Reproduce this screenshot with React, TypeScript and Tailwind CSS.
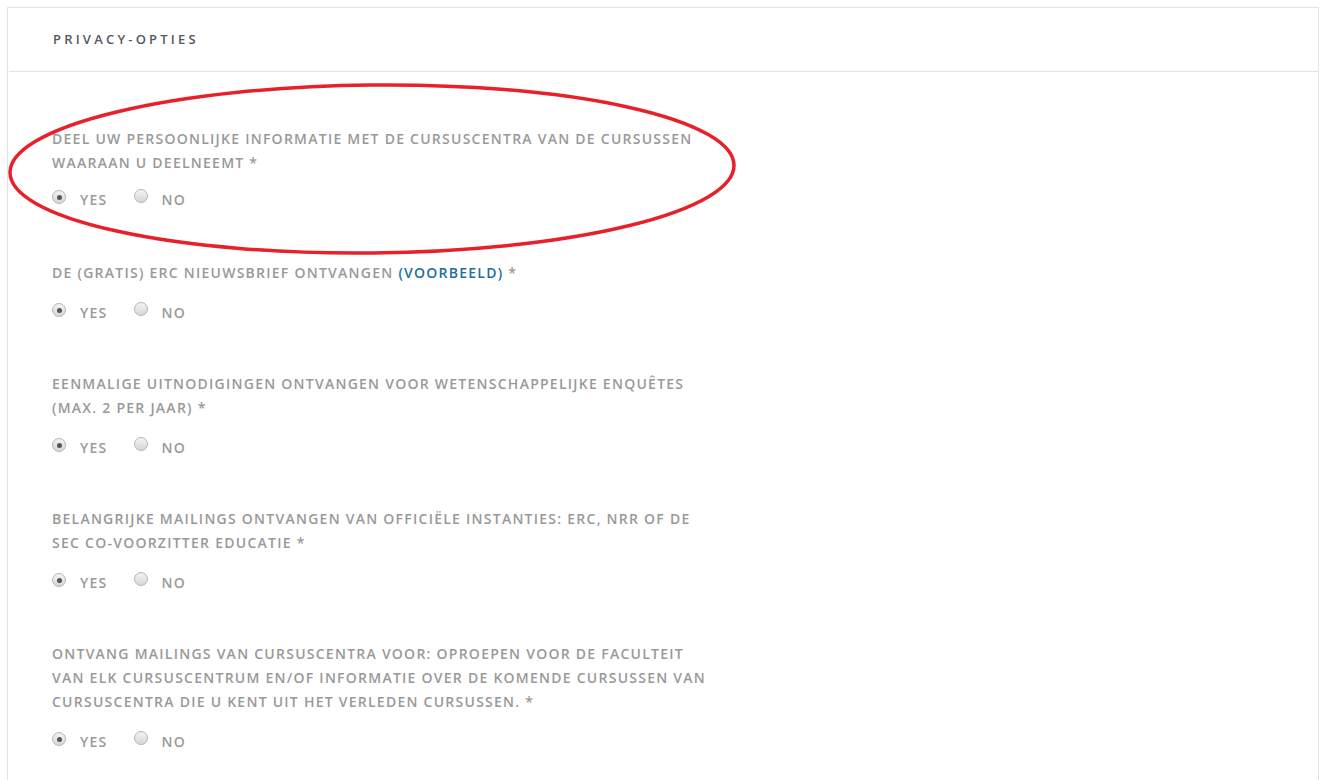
import React from "react";

const Radio = ({ checked }: { checked?: boolean }) => (
  <span className="relative inline-block w-[14px] h-[14px] rounded-full border border-[#b5b5b5] bg-gradient-to-b from-[#f4f4f4] to-[#d6d6d6] shrink-0">
    {checked && (
      <span className="absolute left-[3.5px] top-[3.5px] w-[5px] h-[5px] rounded-full bg-[#555]" />
    )}
  </span>
);

const Question = ({ children, first }: { children: React.ReactNode; first?: boolean }) => (
  <div className={first ? "mb-[52px]" : "mb-[50px]"}>
    <div className="max-w-[660px] text-[14px] leading-[24px] font-semibold tracking-[1.25px] text-[#999]">
      {children}
    </div>
    <div
      className={
        (first ? "mt-[10px] " : "mt-[13px] ") +
        "flex items-center h-[24px] text-[14px] font-semibold tracking-[1.25px] text-[#999]"
      }
    >
      <Radio checked />
      <span className="ml-[14px] mt-[5px]">YES</span>
      <span className="ml-[26px]">
        <Radio />
      </span>
      <span className="ml-[14px] mt-[5px]">NO</span>
    </div>
  </div>
);

export default function App() {
  return (
    <div
      className="w-[1325px] h-[780px] overflow-hidden bg-white pt-[7px] pl-[7px] pr-[6px]"
      style={{ fontFamily: '"Open Sans", "Noto Sans", sans-serif' }}
    >
      <div className="relative border border-[#e3e3e3] border-b-0 h-[800px]">
        <div className="h-[64px] flex items-center pl-[44px] pt-[1px] border-b border-[#e3e3e3] ml-[1px]">
          <span className="text-[13px] font-semibold tracking-[3.2px] text-[#55585d]">PRIVACY-OPTIES</span>
        </div>
        <div className="pl-[44px] pt-[55px]">
          <Question first>DEEL UW PERSOONLIJKE INFORMATIE MET DE CURSUSCENTRA VAN DE CURSUSSEN WAARAAN U DEELNEEMT *</Question>
          <Question>
            DE (GRATIS) ERC NIEUWSBRIEF ONTVANGEN <span className="text-[#1a6fa0]">(VOORBEELD)</span> *
          </Question>
          <Question>EENMALIGE UITNODIGINGEN ONTVANGEN VOOR WETENSCHAPPELIJKE ENQUÊTES (MAX. 2 PER JAAR) *</Question>
          <Question>BELANGRIJKE MAILINGS ONTVANGEN VAN OFFICIËLE INSTANTIES: ERC, NRR OF DE SEC CO-VOORZITTER EDUCATIE *</Question>
          <Question>ONTVANG MAILINGS VAN CURSUSCENTRA VOOR: OPROEPEN VOOR DE FACULTEIT VAN ELK CURSUSCENTRUM EN/OF INFORMATIE OVER DE KOMENDE CURSUSSEN VAN CURSUSCENTRA DIE U KENT UIT HET VERLEDEN CURSUSSEN. *</Question>
        </div>
        <svg className="absolute left-0 top-0 pointer-events-none" width="760" height="270">
          <ellipse cx="364" cy="161" rx="362" ry="84" fill="none" stroke="#e8202a" strokeWidth="3.5" transform="rotate(-0.6 364 161)" />
        </svg>
      </div>
    </div>
  );
}
